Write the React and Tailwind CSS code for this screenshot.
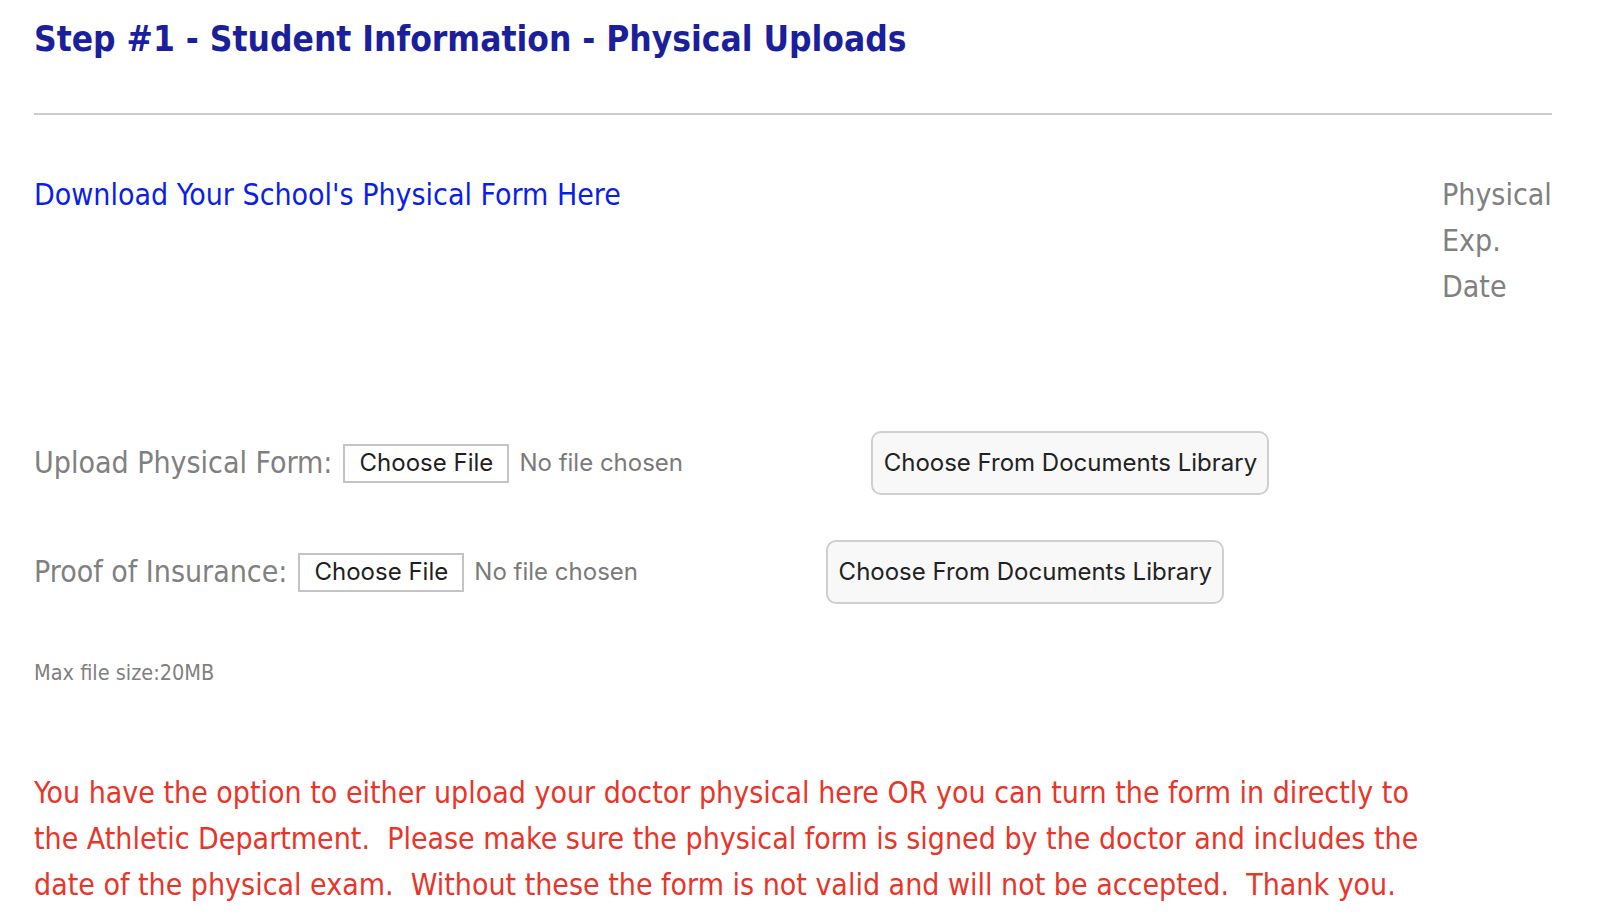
import React from 'react';

const bodyFont = { fontFamily: '"DejaVu Sans Condensed", "Liberation Sans", sans-serif' };

function FileRow({ label }) {
  return (
    <div className="flex items-center h-[64px]">
      <span className="text-[30px] leading-[46px] text-[#808080] whitespace-nowrap" style={bodyFont}>
        {label}
      </span>
      <div className="flex items-center ml-[11px] w-[528px]">
        <span className="flex items-center justify-center w-[166px] h-[39px] border-2 border-[#c4c4c4] bg-white text-[24px] text-[#1f1f1f] font-['Inter',sans-serif]">
          Choose File
        </span>
        <span className="ml-[10px] text-[24px] text-[#7a7a7a] font-['Inter',sans-serif]">No file chosen</span>
      </div>
      <button className="h-[64px] w-[398px] rounded-[10px] border-2 border-[#cfcfcf] bg-[#f8f8f8] text-[24px] text-[#222] font-['Inter',sans-serif]">
        Choose From Documents Library
      </button>
    </div>
  );
}

export default function App() {
  return (
    <div className="min-h-[920px] bg-white pl-[34px] pr-[56px]">
      {/* Header */}
      <h1
        className="pt-[19px] text-[35px] leading-[40px] font-bold text-[#1b1f9b] whitespace-nowrap"
        style={bodyFont}
      >
        Step #1 - Student Information - Physical Uploads
      </h1>
      <div className="mt-[54px] h-[2px] bg-[#cccccc]" />

      {/* Download link + expiration */}
      <div className="mt-[57px] flex justify-between text-[30px] leading-[46px]" style={bodyFont}>
        <a href="#" className="text-[#0b1ee8]">
          Download Your School's Physical Form Here
        </a>
        <div className="w-[110px] text-[#808080]">
          Physical
          <br />
          Exp.
          <br />
          Date
        </div>
      </div>

      {/* Uploads */}
      <div className="mt-[121px]">
        <FileRow label="Upload Physical Form:" />
      </div>
      <div className="mt-[45px]">
        <FileRow label="Proof of Insurance:" />
      </div>

      <p className="mt-[54px] text-[21.5px] leading-[30px] text-[#808080]" style={bodyFont}>
        Max file size:20MB
      </p>

      <p className="mt-[82px] text-[30px] leading-[46px] text-[#e8352a] whitespace-nowrap" style={bodyFont}>
        You have the option to either upload your doctor physical here OR you can turn the form in directly to
        <br />
        the Athletic Department.{'\u00a0 '}Please make sure the physical form is signed by the doctor and includes the
        <br />
        date of the physical exam.{'\u00a0 '}Without these the form is not valid and will not be accepted.{'\u00a0 '}Thank you.
      </p>
    </div>
  );
}
